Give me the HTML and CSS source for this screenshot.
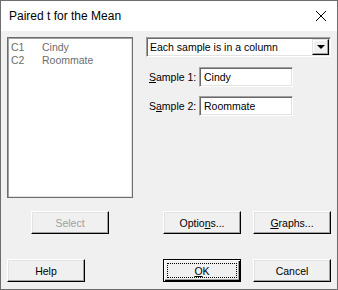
FILE: index.html
```html
<!DOCTYPE html>
<html lang="en">
<head>
  <meta charset="UTF-8">
  <title>Paired t for the Mean</title>
  <link rel="stylesheet" href="styles.css">
</head>
<body>
  <div class="dialog">
    <div class="titlebar">
      <span class="title">Paired t for the Mean</span>
      <svg class="close" width="12" height="12" viewBox="0 0 12 12">
        <path d="M1 1 L11 11 M11 1 L1 11" stroke="#000" stroke-width="1" fill="none"/>
      </svg>
    </div>

    <div class="content">
      <div class="main">
        <div class="left">
          <div class="varlist">
            <div class="var"><span class="col">C1</span><span>Cindy</span></div>
            <div class="var"><span class="col">C2</span><span>Roommate</span></div>
          </div>
          <div class="select-row">
            <button class="btn" disabled>Select</button>
          </div>
        </div>

        <div class="right">
          <div class="combo">
            <span class="combo-text">Each sample is in a column</span>
            <span class="combo-btn"><span class="tri"></span></span>
          </div>
          <div class="field first">
            <label><u>S</u>ample 1:</label>
            <div class="input">Cindy</div>
          </div>
          <div class="field">
            <label>S<u>a</u>mple 2:</label>
            <div class="input">Roommate</div>
          </div>
          <div class="opts">
            <button class="btn">Optio<u>n</u>s...</button>
            <button class="btn"><u>G</u>raphs...</button>
          </div>
        </div>
      </div>

      <div class="footer">
        <div class="left">
          <button class="btn">Help</button>
        </div>
        <div class="opts">
          <button class="btn default"><span class="focus"><u>O</u>K</span></button>
          <button class="btn">Cancel</button>
        </div>
      </div>
    </div>
  </div>
</body>
</html>
```

FILE: styles.css
```css
* { margin: 0; padding: 0; box-sizing: border-box; }
body {
  font-family: 'Liberation Sans', Arial, sans-serif;
  font-size: 10.5px;
  color: #000;
  background: #f0f0f0;
}
.dialog {
  width: 338px;
  height: 290px;
  border: 1px solid #6e6e6e;
  background: #f0f0f0;
  display: flex;
  flex-direction: column;
}
.titlebar {
  height: 30px;
  background: #fff;
  display: flex;
  align-items: center;
  justify-content: space-between;
  padding: 0 10px 0 8px;
}
.title {
  font-family: 'Liberation Sans', Arial, sans-serif;
  font-size: 12px;
  color: #000;
}
.content {
  padding: 6px 6px 0 6px;
}
.main {
  display: grid;
  grid-template-columns: 126px 185px;
  column-gap: 13px;
  height: 197px;
}
.left {
  display: flex;
  flex-direction: column;
}
.varlist {
  height: 161px;
  background: #fff;
  border: 1px solid #6d6d6d;
  box-shadow: inset 1px 1px #a0a0a0, inset -1px -1px #e3e3e3;
  padding: 3px 3px;
  color: #6d6d6d;
}
.var {
  display: flex;
  height: 13px;
  line-height: 13px;
}
.col { width: 31px; }
.select-row {
  margin-top: 13px;
  display: flex;
  justify-content: center;
}
.btn {
  width: 78px;
  height: 23px;
  font-family: 'Liberation Sans', Arial, sans-serif;
  font-size: 10.5px;
  color: #000;
  background: #f0f0f0;
  border: 1px solid;
  border-color: #fff #000 #000 #fff;
  box-shadow: inset -1px -1px #a0a0a0, inset 1px 1px #e3e3e3;
  display: flex;
  align-items: center;
  justify-content: center;
}
.btn:disabled { color: #a0a0a0; }
.btn.default {
  border: 1px solid #000;
  box-shadow: inset 1px 1px #fff, inset -1px -1px #000, inset -2px -2px #a0a0a0;
  padding: 3px;
}
.focus {
  flex: 1;
  height: 100%;
  border: 1px dotted #000;
  display: flex;
  align-items: center;
  justify-content: center;
}
.right {
  display: flex;
  flex-direction: column;
}
.combo {
  height: 20px;
  background: #fff;
  border: 1px solid;
  border-color: #a0a0a0 #fff #fff #a0a0a0;
  box-shadow: inset 1px 1px #696969, inset -1px -1px #e3e3e3;
  display: flex;
  align-items: center;
  justify-content: space-between;
  padding: 1px 1px 1px 3px;
}
.combo-btn {
  width: 17px;
  height: 16px;
  background: #f0f0f0;
  border: 1px solid;
  border-color: #e3e3e3 #000 #000 #e3e3e3;
  box-shadow: inset -1px -1px #a0a0a0, inset 1px 1px #fff;
  display: flex;
  align-items: center;
  justify-content: center;
}
.tri {
  width: 0;
  height: 0;
  border-left: 4px solid transparent;
  border-right: 4px solid transparent;
  border-top: 4px solid #000;
}
.field {
  display: flex;
  align-items: center;
  margin-top: 9px;
}
.field.first { margin-top: 10px; }
.field label {
  flex-shrink: 0;
  width: 53px;
  padding-left: 3px;
  white-space: nowrap;
}
.input {
  width: 94px;
  height: 20px;
  background: #fff;
  border: 1px solid;
  border-color: #a0a0a0 #fff #fff #a0a0a0;
  box-shadow: inset 1px 1px #696969, inset -1px -1px #e3e3e3;
  padding: 0 4px;
  line-height: 18px;
}
.opts {
  margin-top: auto;
  display: flex;
  justify-content: space-between;
  padding-left: 17px;
}
.footer {
  margin-top: 25px;
  display: grid;
  grid-template-columns: 126px 185px;
  column-gap: 13px;
}
.footer .opts { margin-top: 0; }
```
